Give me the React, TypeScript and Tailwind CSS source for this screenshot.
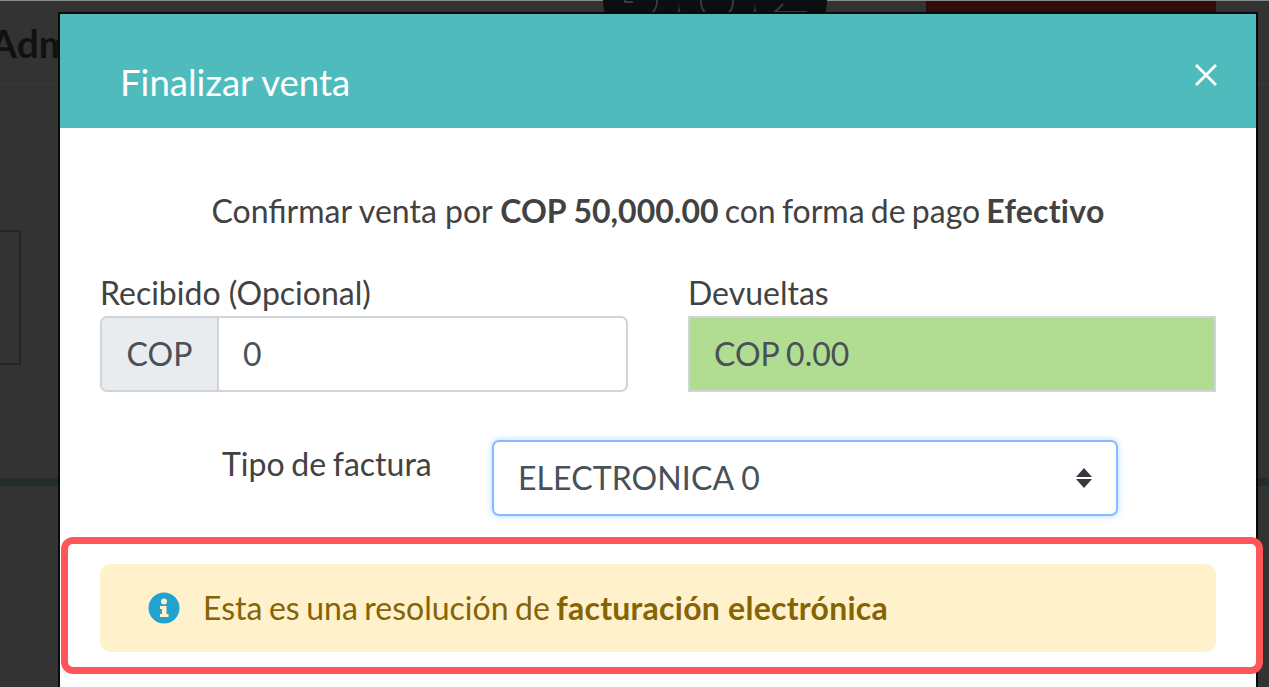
import React from "react";

function Bg() {
  return (
    <div className="flex h-full flex-col">
      <div className="h-px bg-[#8a8a8a]" />
      <div className="flex h-[84px] items-start border-b border-[#3b3b3b]">
        <div className="ml-[-10px] mt-[18px] w-[72px] text-[39px] font-bold leading-[48px] text-[#111]">Adm</div>
        <div className="ml-[541px] flex">
          <div className="mt-[-35px] flex h-[72px] w-[76px] items-center justify-center rounded-full bg-[#0d0e10]">
            <svg width="40" height="40" viewBox="0 0 40 40" fill="none" stroke="#3a3a3a" strokeWidth="2"><path d="M4 20 A16 16 0 1 1 10 32 M4 12 V20 H12" /></svg>
          </div>
          <div className="mt-[-35px] flex h-[72px] w-[76px] items-center justify-center rounded-full bg-[#0d0e10]">
            <svg width="40" height="40" viewBox="0 0 40 40" fill="none" stroke="#3a3a3a" strokeWidth="2"><circle cx="20" cy="20" r="16" /></svg>
          </div>
          <div className="mt-[-35px] flex h-[72px] w-[72px] items-center justify-center rounded-full bg-[#0d0e10]">
            <svg width="40" height="40" viewBox="0 0 40 40" fill="none" stroke="#3a3a3a" strokeWidth="2"><path d="M4 30 H36 M12 22 L4 30 L12 38" /></svg>
          </div>
        </div>
        <div className="ml-[99px] h-[50px] w-[290px] bg-[#300c0c]" />
      </div>
      <div className="mt-[145px] h-[135px] w-[21px] border-2 border-l-0 border-[#252525]" />
      <div className="mt-[113px] h-2 bg-[#212c2c]" />
    </div>
  );
}

export default function App() {
  return (
    <div className="relative h-[687px] w-full overflow-hidden bg-[#333333] font-['Lato','Liberation_Sans',sans-serif]">
      <Bg />
      <div className="absolute left-[58px] top-[12px] w-[1200px] border-2 border-b-0 border-[#0a0a0a] bg-white">
        <div className="flex h-[114px] items-start justify-between bg-[#4fbbbd] pl-[60px] pr-[38px]">
          <h1 className="mt-[45px] text-[36.6px] leading-[46px] font-normal text-white">Finalizar venta</h1>
          <svg className="mt-[49px]" width="24" height="24" viewBox="0 0 24 24" fill="none" stroke="white" strokeWidth="2.8">
            <path d="M2 2 L22 22 M22 2 L2 22" />
          </svg>
        </div>
        <div className="px-[40px] pt-[62px] text-[32px] leading-[42px] text-[#424242]">
          <p className="text-center">
            Confirmar venta por <b>COP 50,000.00</b>
            <span className="[word-spacing:-2px]"> con forma de pago </span>
            <b className="tracking-[0.25px]">Efectivo</b>
          </p>
          <div className="mt-[40px] flex gap-[60px]">
            <div className="w-[528px]">
              <div className="h-[44px]">Recibido (Opcional)</div>
              <div className="flex h-[76px] rounded-[7px] border-2 border-[#ced4da]">
                <div className="flex w-[117px] items-center justify-center rounded-l-[5px] border-r-2 border-[#ced4da] bg-[#e9ecef] text-[#495057]">COP</div>
                <div className="flex items-center pl-[24px] text-[#495057]">0</div>
              </div>
            </div>
            <div className="w-[528px]">
              <div className="h-[44px]">Devueltas</div>
              <div className="flex h-[76px] items-center border-2 border-[#ced4da] bg-[#b0dd92] pl-[24px] text-[#495057] [word-spacing:-1px]">COP 0.00</div>
            </div>
          </div>
          <div className="mt-[48px] flex">
            <div className="ml-[122px] mt-[3px] w-[270px] [word-spacing:-1.5px]">Tipo de factura</div>
            <div className="flex h-[76px] w-[626px] items-center justify-between rounded-[7px] border-2 border-[#80bdff] pl-[24px] pr-[24px] text-[#495057] shadow-[0_0_6px_rgba(128,189,255,0.6)]">
              <span className="tracking-[0.1px]">ELECTRONICA 0</span>
              <svg width="16" height="20" viewBox="0 0 16 20" fill="#343a40">
                <path d="M8 0 L16 9 H0 Z M0 11 H16 L8 20 Z" />
              </svg>
            </div>
          </div>
          <div className="mt-[48px] flex h-[88px] w-[1116px] items-center gap-[23px] rounded-[10px] bg-[#fff1cc] pl-[48px] text-[#856404]">
            <svg width="32" height="32" viewBox="0 0 32 32">
              <circle cx="16" cy="16" r="15.5" fill="#22a2d0" />
              <circle cx="16" cy="9.5" r="3" fill="#fff1cc" />
              <path d="M12 14 H18.5 V22 H20.5 V25 H12 V22 H14 V17 H12 Z" fill="#fff1cc" />
            </svg>
            <span className="[word-spacing:-1.7px]">Esta es una resolución de <b className="tracking-[0.25px] [word-spacing:0px]">facturación electrónica</b></span>
          </div>
          <div className="h-[40px]" />
        </div>
      </div>
      <div className="pointer-events-none absolute left-[61px] top-[537px] h-[137px] w-[1202px] rounded-[12px] border-[7px] border-[#ff5759]" />
    </div>
  );
}
